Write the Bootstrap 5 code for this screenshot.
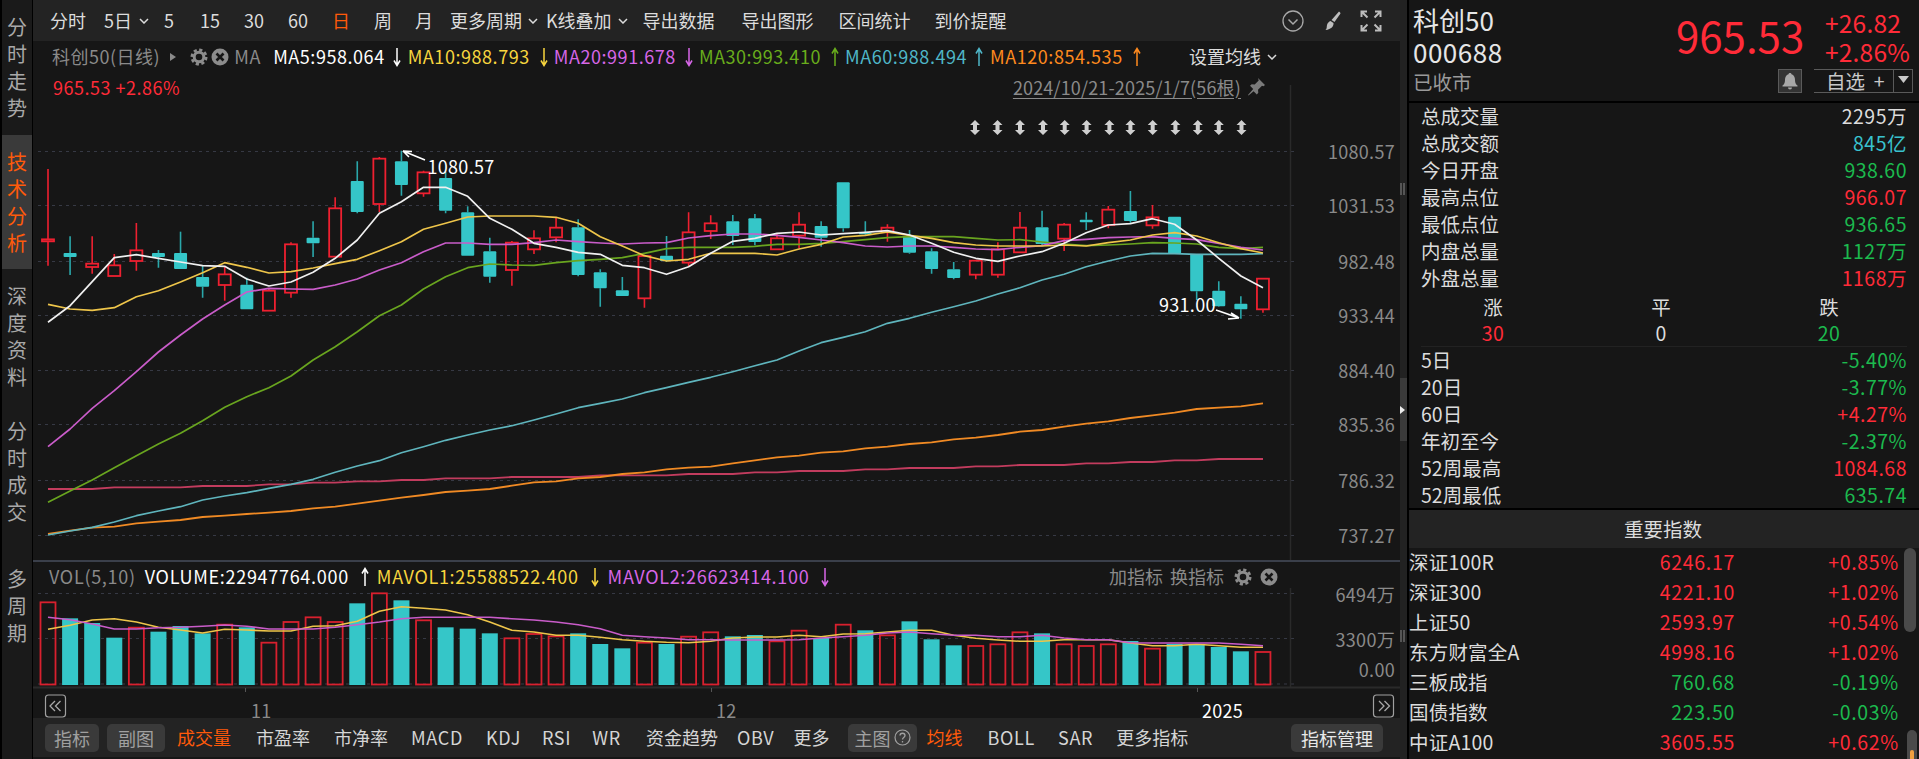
<!DOCTYPE html>
<html lang="zh-CN">
<head>
<meta charset="utf-8">
<title>科创50</title>
<link rel="stylesheet" href="https://cdn.jsdelivr.net/npm/bootstrap@5.3.0/dist/css/bootstrap.min.css">
<style>
html,body{height:759px;overflow:hidden;}
body{background:#000;font-family:"Noto Sans CJK SC","Liberation Sans",sans-serif;font-size:18px;color:#d8d8d8;line-height:1.35;width:1919px;}
.side{width:30px;margin-left:2px;margin-right:1px;background:#1a1a1a;color:#a8a8a8;flex:none;height:759px;font-size:20px;}
.stab{height:134.5px;line-height:27px;text-align:center;}
.stab-on{background:#3a3a3a;color:#ff5a0a;}
.centre{width:1367px;background:#161616;flex:none;height:759px;}
.bar-t{height:41px;background:#232323;padding-left:17px;color:#dcdcdc;flex:none;}
.bar-b{height:39px;background:#232323;padding-left:12px;padding-right:17px;color:#d5d5d5;flex:none;}
.on{color:#ff5a0a;}
.lat{letter-spacing:.7px;}
.lat2{letter-spacing:.55px;}
.g3{margin-left:3px}.g7{margin-left:7px}.g9{margin-left:9px}.g11{margin-left:11px}.g12{margin-left:12px}.g13{margin-left:13px}.g14{margin-left:14px}.g15{margin-left:15px}.g17{margin-left:17px}.g18{margin-left:18px}.g19{margin-left:19px}.g20{margin-left:20px}.g21{margin-left:21px}.g22{margin-left:22px}.g23{margin-left:23px}.g24{margin-left:24px}.g25{margin-left:25px}.g26{margin-left:26px}.g27{margin-left:27px}
.g4{margin-left:4px}.g5{margin-left:5px}.g6{margin-left:6px}.g8{margin-left:8px}.g10{margin-left:10px}
.gbtn{background:#3a3a3a;border-radius:5px;height:28px;color:#a0a0a0;font-size:18px;padding:0 9px;border:0;line-height:28px;}
.gbtn-wide{padding:0 11px;}
.gbtn-q{padding:0 6px;}
.gbtn-w{color:#e8e8e8;padding:0 10px;}
.leg{height:31px;padding-left:19px;flex:none;white-space:nowrap;}
.leg2{height:26px;padding-left:16px;flex:none;white-space:nowrap;padding-top:3px;}
.mute{color:#8a8a8a;}
.c-w{color:#fff}.c-y{color:#f7d53e}.c-m{color:#d766e8}.c-g{color:#69ad1c}.c-t{color:#4fb6c8}.c-o{color:#ff8a1e}
.up{color:#ff2b38;letter-spacing:.5px}.dn{color:#1cba4e;letter-spacing:.5px}.cy{color:#39c2cf;letter-spacing:.5px}.wh{color:#dcdcdc}
.sp{letter-spacing:.5px;}
.leg-two{position:absolute;left:0;right:0;top:30px;height:32px;padding:0 134px 0 20px;}
.dt{color:#8a8a8a;text-decoration:underline;text-underline-offset:3px;letter-spacing:.15px;}
.chart{display:block;flex:none;overflow:visible;}
.chart text{font-family:"Noto Sans CJK SC","Liberation Sans",sans-serif;font-size:18px;fill:#8a8a8a;dominant-baseline:central;letter-spacing:.3px;}
.chart text.lbl{fill:#fff;}
.sep{height:2px;background:#3a3f4a;flex:none;}
.gut{width:7px;background:#222;flex:none;height:759px;margin-right:2px;}
.gut-hdl{height:12px;margin-top:183px;border-left:2px solid #555;border-right:2px solid #555;width:5px;}
.gut-btn{height:63px;margin-top:183px;background:#3a3a3a;color:#eee;}
.gut-hdl2{height:12px;margin-top:189px;border-left:2px solid #555;border-right:2px solid #555;width:5px;}
.right{width:510px;background:#161616;height:759px;flex:none;font-size:19.5px;}
.head{height:101px;position:relative;flex:none;padding-top:4px;}
.nm{font-size:26px;line-height:32px;padding-left:4px;color:#e6e6e6;}
.nm-d{letter-spacing:.5px;}
.st{font-size:19.5px;color:#9a9a9a;padding-left:4px;line-height:28px;}
.px{font-size:42px;color:#ff2b38;width:132px;text-align:left;line-height:52px;margin-top:-4px;}
.chg{font-size:24.5px;color:#ff2b38;line-height:29px;width:94px;letter-spacing:.2px;}
.hbar{height:2px;background:#000;flex:none;}
.stat{height:27px;padding:0 12px;flex:none;}
.stat-col{height:191px;flex:none;}
.stat-box{height:161px;overflow:hidden;flex:none;}
.trio{height:26px;flex:none;}
.trio span{width:168px;text-align:center;display:block;}
.thin{height:1px;background:#222;margin:0 12px;flex:none;}
.ix-h{height:38px;background:#232323;flex:none;font-size:19.5px;color:#dcdcdc;padding-right:2px;}
.ix{height:30px;flex:none;position:relative;}
.ix-n{width:200px;color:#dcdcdc;white-space:nowrap;letter-spacing:.2px;}
.ix-p{width:126px;text-align:right;letter-spacing:.7px;}
.ix-c{width:164px;text-align:right;letter-spacing:.7px;}
.ix-wrap{position:relative;flex:1;margin-top:-1px;}
.scr{position:absolute;right:3px;top:1px;width:12px;height:84px;background:#4a4a4a;border-radius:6px;}
.wgt{position:absolute;right:2px;bottom:0;width:10px;height:29px;background:#4a4a4a;border-radius:5px 5px 0 0;}
.wgt-i{position:absolute;left:3px;bottom:0;width:4px;height:9px;background:#f0a040;border-radius:2px 2px 0 0;}
.ibtn{position:absolute;top:69px;left:369px;width:24px;height:24px;background:#333;border:1px solid #5a5a5a;padding:2px;}
.fav{position:absolute;top:69px;left:405px;width:99px;height:24px;border-top:1px solid #5a5a5a;border-bottom:1px solid #5a5a5a;font-size:19.5px;color:#c8c8c8;}
.fav-a{width:80px;padding-left:12px;border-right:1px solid #5a5a5a;height:100%;line-height:22px;}
.fav-b{width:19px;border-right:1px solid #5a5a5a;height:100%;padding-bottom:4px;}
.pinfo{position:absolute;top:8px;left:267px;}
.ic{flex:none;display:block;}
.end18{margin-right:18px;}
.end123{margin-right:123px;}
.end122{margin-right:122px;}
</style>
</head>
<body class="d-flex">
<svg width="0" height="0" class="position-absolute">
<defs>
<symbol id="chev" viewBox="0 0 10 6"><path d="M1 1l4 4 4-4" fill="none" stroke="currentColor" stroke-width="1.5"/></symbol>
<symbol id="adn" viewBox="0 0 8 20"><path d="M4 1v17M1 13.500l3 5 3-5" fill="none" stroke="currentColor" stroke-width="1.500"/></symbol>
<symbol id="aup" viewBox="0 0 8 20"><path d="M4 19V2M1 6.500l3-5 3 5" fill="none" stroke="currentColor" stroke-width="1.500"/></symbol>
<symbol id="gear" viewBox="0 0 18 18"><circle cx="9" cy="9" r="4.800" fill="none" stroke="#8c8c8c" stroke-width="3"/><circle cx="9" cy="9" r="7.200" fill="none" stroke="#8c8c8c" stroke-width="2.600" stroke-dasharray="3.200 2.450"/></symbol>
<symbol id="xc" viewBox="0 0 18 18"><circle cx="9" cy="9" r="8.500" fill="#8c8c8c"/><path d="M5.500 5.500l7 7m0-7l-7 7" stroke="#161616" stroke-width="2.600"/></symbol>
<symbol id="updn" viewBox="0 0 11 15"><path d="M5.500 0L10.500 5H7.500V10H10.500L5.500 15 .5 10H3.500V5H.5z" fill="#cfcfcf"/></symbol>
</defs>
</svg>

<nav class="side d-flex flex-column">
<div class="stab d-flex align-items-center justify-content-center"><div>分<br>时<br>走<br>势</div></div>
<div class="stab stab-on d-flex align-items-center justify-content-center"><div>技<br>术<br>分<br>析</div></div>
<div class="stab d-flex align-items-center justify-content-center"><div>深<br>度<br>资<br>料</div></div>
<div class="stab d-flex align-items-center justify-content-center"><div>分<br>时<br>成<br>交</div></div>
<div class="stab d-flex align-items-center justify-content-center"><div>多<br>周<br>期</div></div>
</nav>

<main class="centre d-flex flex-column">
<div class="bar-t d-flex align-items-center">
<span>分时</span>
<span class="g18">5日</span><svg class="ic g7" width="10" height="6"><use href="#chev"/></svg>
<span class="g15">5</span><span class="g26">15</span><span class="g24">30</span><span class="g24">60</span>
<span class="g24 on">日</span><span class="g24">周</span><span class="g23">月</span>
<span class="g17">更多周期</span><svg class="ic g6" width="10" height="6"><use href="#chev"/></svg>
<span class="g8">K线叠加</span><svg class="ic g6" width="10" height="6"><use href="#chev"/></svg>
<span class="g15">导出数据</span><span class="g27">导出图形</span><span class="g25">区间统计</span><span class="g24">到价提醒</span>
<div class="ms-auto d-flex align-items-center">
<svg class="ic" width="22" height="22" viewBox="0 0 22 22"><circle cx="11" cy="11" r="10" fill="none" stroke="#a8a8a8" stroke-width="1.300"/><path d="M6.500 9.500l4.500 4.500 4.500-4.500" fill="none" stroke="#a8a8a8" stroke-width="1.500"/></svg>
<svg class="ic g19" width="18" height="20" viewBox="0 0 18 20"><path d="M16 .5c1 .6 1.500 1.300 1.500 2L11.500 11 8.500 9zM7.500 10l3 2c.3 3-2 6.500-8 7 1.800-1.700 1-3.500 1.500-5 .5-2 2-3.500 3.500-4z" fill="#bdbdbd"/></svg>
<svg class="ic g19 end18" width="22" height="22" viewBox="0 0 22 22"><path d="M1.500 7V1.500H7M1.500 1.500L7.500 7.500M20.500 7V1.500H15M20.500 1.500L14.500 7.500M1.500 15v5.500H7M1.500 20.500l6-6M20.500 15v5.500H15M20.500 20.500l-6-6" fill="none" stroke="#bdbdbd" stroke-width="2"/></svg>
</div>
</div>

<div class="position-relative flex-none">
<div class="leg d-flex align-items-center">
<span class="mute sp">科创50(日线)</span>
<svg class="ic g10" width="6" height="8" viewBox="0 0 6 8"><path d="M0 0l6 4-6 4z" fill="#8a8a8a"/></svg>
<svg class="ic g14" width="18" height="18"><use href="#gear"/></svg>
<svg class="ic g3" width="18" height="18"><use href="#xc"/></svg>
<span class="mute g5 lat">MA</span>
<span class="c-w g12 lat2">MA5:958.064</span><svg class="ic g8 c-w" width="8" height="20"><use href="#adn"/></svg>
<span class="c-y g7 lat2">MA10:988.793</span><svg class="ic g10 c-y" width="8" height="20"><use href="#adn"/></svg>
<span class="c-m g6 lat2">MA20:991.678</span><svg class="ic g9 c-m" width="8" height="20"><use href="#adn"/></svg>
<span class="c-g g6 lat2">MA30:993.410</span><svg class="ic g10 c-g" width="8" height="20"><use href="#aup"/></svg>
<span class="c-t g6 lat2">MA60:988.494</span><svg class="ic g8 c-t" width="8" height="20"><use href="#aup"/></svg>
<span class="c-o g7 lat2">MA120:854.535</span><svg class="ic g10 c-o" width="8" height="20"><use href="#aup"/></svg>
<span class="ms-auto wh">设置均线</span><svg class="ic g6 end123" width="10" height="6"><use href="#chev"/></svg>
</div>
<div class="leg-two d-flex align-items-center justify-content-between">
<span class="up">965.53 +2.86%</span>
<div class="d-flex align-items-center">
<span class="dt">2024/10/21-2025/1/7(56根)</span>
<svg class="ic g5" width="20" height="20" viewBox="0 0 20 20"><path d="M12 1l7 7-1.500 1.200-1.500-.4-4 4 .3 3-1.500 1.700-3.200-3.200L2.500 18.500 2 18l5.200-6-3.200-3.200L5.700 7.300l3 .3 4-4-.4-1.500z" fill="#7a7a7a"/></svg>
</div>
</div>
<svg id="main" class="chart" width="1367" height="488" viewBox="33 72 1367 488">
<g id="mgrid"></g>
<path d="M1290.500 85V560" stroke="#2a2a2a" stroke-width="1.500"/>
<text x="1395" y="151" text-anchor="end">1080.57</text>
<text x="1395" y="205" text-anchor="end">1031.53</text>
<text x="1395" y="261" text-anchor="end">982.48</text>
<text x="1395" y="315" text-anchor="end">933.44</text>
<text x="1395" y="370" text-anchor="end">884.40</text>
<text x="1395" y="424" text-anchor="end">835.36</text>
<text x="1395" y="480" text-anchor="end">786.32</text>
<text x="1395" y="535" text-anchor="end">737.27</text>
<g id="mc"></g>
<g id="mup"></g>
<text class="lbl" x="427.500" y="166">1080.57</text>
<text class="lbl" x="1159" y="304">931.00</text>
<path d="M425 160L403 151M403 151l9 .5M403 151l6 6M1216 310L1239 318M1239 318l-11 1M1239 318l-8-5" fill="none" stroke="#fff" stroke-width="1.600"/>
</svg>
</div>
<div class="sep"></div>
<div class="leg2 d-flex align-items-center">
<span class="mute lat">VOL(5,10)</span>
<span class="c-w g9 lat">VOLUME:22947764.000</span><svg class="ic g12 c-w" width="8" height="20"><use href="#aup"/></svg>
<span class="c-y g8 lat">MAVOL1:25588522.400</span><svg class="ic g12 c-y" width="8" height="20"><use href="#adn"/></svg>
<span class="c-m g9 lat">MAVOL2:26623414.100</span><svg class="ic g12 c-m" width="8" height="20"><use href="#adn"/></svg>
<span class="mute ms-auto">加指标</span><span class="mute g7">换指标</span>
<svg class="ic g10" width="18" height="18"><use href="#gear"/></svg><svg class="ic g8 end122" width="18" height="18"><use href="#xc"/></svg>
</div>
<svg id="vol" class="chart" width="1367" height="130" viewBox="33 590 1367 130">
<g id="vgrid"></g>
<path d="M1290.500 590V689" stroke="#2a2a2a" stroke-width="1.500"/>
<path d="M33 689.500H1400" stroke="#2a2a2a" stroke-width="2"/>
<path d="M245.500 690v4M711.500 690v4M1197.500 690v4" stroke="#555" stroke-width="1"/>
<text x="1395" y="596" text-anchor="end">6494万</text>
<text x="1395" y="641" text-anchor="end">3300万</text>
<text x="1395" y="671" text-anchor="end">0.00</text>
<g id="vb"></g>
<g id="vl"></g>
<text x="251" y="712">11</text>
<text x="716" y="712">12</text>
<text class="lbl" x="1202" y="712">2025</text>
<rect x="45.500" y="697" width="20" height="22" rx="3" fill="none" stroke="#a0a0a0" stroke-width="1.200"/>
<path d="M55 703l-5 5 5 5M60.500 703l-5 5 5 5" fill="none" stroke="#a8a8a8" stroke-width="1.300"/>
<rect x="1373.500" y="697" width="20" height="22" rx="3" fill="none" stroke="#a0a0a0" stroke-width="1.200"/>
<path d="M1379 703l5 5-5 5M1384.500 703l5 5-5 5" fill="none" stroke="#a8a8a8" stroke-width="1.300"/>
</svg>
<div class="bar-b d-flex align-items-center">
<button class="gbtn">指标</button><button class="gbtn gbtn-wide g8">副图</button>
<span class="on g12">成交量</span><span class="g25">市盈率</span><span class="g24">市净率</span>
<span class="g23 lat">MACD</span><span class="g23 lat">KDJ</span><span class="g21 lat">RSI</span><span class="g21 lat">WR</span>
<span class="g25">资金趋势</span><span class="g19 lat">OBV</span><span class="g19">更多</span>
<button class="gbtn gbtn-q g19 d-flex align-items-center"><span>主图</span><svg class="ic g4" width="17" height="17" viewBox="0 0 17 17"><circle cx="8.500" cy="8.500" r="7.500" fill="none" stroke="#a0a0a0" stroke-width="1.200"/><path d="M6 6.500c0-3 5-3 5 0 0 2-2.500 2-2.500 4M8.500 12v1.500" fill="none" stroke="#a0a0a0" stroke-width="1.300"/></svg></button>
<span class="on g9">均线</span><span class="g25 lat">BOLL</span><span class="g23 lat">SAR</span><span class="g23">更多指标</span>
<button class="gbtn gbtn-w ms-auto">指标管理</button>
</div>
</main>

<div class="gut d-flex flex-column">
<div class="gut-hdl"></div>
<div class="gut-btn d-flex align-items-center"><svg class="ic" width="6" height="8" viewBox="0 0 6 8"><path d="M0 0l5 4-5 4z" fill="#eee"/></svg></div>
<div class="gut-hdl2"></div>
</div>

<aside class="right d-flex flex-column">
<div class="head">
<div class="nm">科创50</div>
<div class="nm nm-d">000688</div>
<div class="st">已收市</div>
<div class="pinfo d-flex align-items-center">
<div class="px">965.53</div>
<div class="chg g17"><div>+26.82</div><div>+2.86%</div></div>
</div>
<div class="ibtn"><svg class="ic" width="18" height="18" viewBox="0 0 18 18"><path d="M9 1c1 0 1.500.6 1.500 1.300C13 3 14 5.500 14 8c0 3 1 4.500 2.500 5.500v1h-15v-1C3 12.500 4 11 4 8c0-2.500 1-5 3.500-5.700C7.500 1.600 8 1 9 1zM7 15.500h4a2 2 0 0 1-4 0z" fill="#a8a8a8"/></svg></div>
<div class="fav d-flex">
<div class="fav-a">自选&nbsp;&nbsp;+</div>
<div class="fav-b d-flex align-items-center justify-content-center"><svg class="ic" width="11" height="7" viewBox="0 0 11 7"><path d="M0 0h11L5.500 7z" fill="#c8c8c8"/></svg></div>
</div>
</div>
<div class="hbar"></div>
<div class="stat-col d-flex flex-column">
<div class="stat d-flex justify-content-between align-items-center"><span class="wh">总成交量</span><span class="wh sp">2295万</span></div>
<div class="stat d-flex justify-content-between align-items-center"><span class="wh">总成交额</span><span class="cy">845亿</span></div>
<div class="stat d-flex justify-content-between align-items-center"><span class="wh">今日开盘</span><span class="dn">938.60</span></div>
<div class="stat d-flex justify-content-between align-items-center"><span class="wh">最高点位</span><span class="up">966.07</span></div>
<div class="stat d-flex justify-content-between align-items-center"><span class="wh">最低点位</span><span class="dn">936.65</span></div>
<div class="stat d-flex justify-content-between align-items-center"><span class="wh">内盘总量</span><span class="dn">1127万</span></div>
<div class="stat d-flex justify-content-between align-items-center"><span class="wh">外盘总量</span><span class="up">1168万</span></div>
</div>
<div class="trio d-flex align-items-center"><span class="wh">涨</span><span class="wh">平</span><span class="wh">跌</span></div>
<div class="trio d-flex align-items-center"><span class="up">30</span><span class="wh">0</span><span class="dn">20</span></div>
<div class="thin"></div>
<div class="stat-box d-flex flex-column">
<div class="stat d-flex justify-content-between align-items-center"><span class="wh">5日</span><span class="dn">-5.40%</span></div>
<div class="stat d-flex justify-content-between align-items-center"><span class="wh">20日</span><span class="dn">-3.77%</span></div>
<div class="stat d-flex justify-content-between align-items-center"><span class="wh">60日</span><span class="up">+4.27%</span></div>
<div class="stat d-flex justify-content-between align-items-center"><span class="wh">年初至今</span><span class="dn">-2.37%</span></div>
<div class="stat d-flex justify-content-between align-items-center"><span class="wh">52周最高</span><span class="up">1084.68</span></div>
<div class="stat d-flex justify-content-between align-items-center"><span class="wh">52周最低</span><span class="dn">635.74</span></div>
</div>
<div class="hbar"></div>
<div class="ix-h d-flex align-items-center justify-content-center">重要指数</div>
<div class="ix-wrap">
<div class="scr"></div>
<div class="wgt"><div class="wgt-i"></div></div>
<div class="ix d-flex align-items-center"><span class="ix-n">深证100R</span><span class="ix-p up">6246.17</span><span class="ix-c up">+0.85%</span></div>
<div class="ix d-flex align-items-center"><span class="ix-n">深证300</span><span class="ix-p up">4221.10</span><span class="ix-c up">+1.02%</span></div>
<div class="ix d-flex align-items-center"><span class="ix-n">上证50</span><span class="ix-p up">2593.97</span><span class="ix-c up">+0.54%</span></div>
<div class="ix d-flex align-items-center"><span class="ix-n">东方财富全A</span><span class="ix-p up">4998.16</span><span class="ix-c up">+1.02%</span></div>
<div class="ix d-flex align-items-center"><span class="ix-n">三板成指</span><span class="ix-p dn">760.68</span><span class="ix-c dn">-0.19%</span></div>
<div class="ix d-flex align-items-center"><span class="ix-n">国债指数</span><span class="ix-p dn">223.50</span><span class="ix-c dn">-0.03%</span></div>
<div class="ix d-flex align-items-center"><span class="ix-n">中证A100</span><span class="ix-p up">3605.55</span><span class="ix-c up">+0.62%</span></div>
</div>
</aside>

<script src="https://cdn.jsdelivr.net/npm/bootstrap@5.3.0/dist/js/bootstrap.bundle.min.js"></script>
<script>
var NS='http://www.w3.org/2000/svg';
function el(p,n,a){var e=document.createElementNS(NS,n);for(var k in a)e.setAttribute(k,a[k]);p.appendChild(e);return e;}
function X(i){return 48+i*22.09;}
function Y(z){return 130+z/3;}
function V(z){return 540+z/3;}
var mg=document.getElementById('mgrid');
[151,205,261,315,370,424,480,535].forEach(function(y){el(mg,'path',{d:'M38 '+(y+.5)+'H1296',stroke:'#363944','stroke-dasharray':'3 4','stroke-width':1.2});});
var vg=document.getElementById('vgrid');
[595,640,685.5].forEach(function(y){el(vg,'path',{d:'M38 '+(y+.5)+'H1296',stroke:'#363944','stroke-dasharray':'3 4','stroke-width':1.2});});
var C=[['r',117,407,328,334],['t',319,435,369,381],['r',319,431,401,411],['r',372,438,406,438],['r',279,422,361,393],['t',360,413,369,381],['t',305,417,369,417],['t',406,503,441,470],['r',410,512,433,465],['t',443,538,464,538],['r',475,542,482,542],['r',337,503,343,488],['t',274,381,323,340],['r',202,380,235,380],['t',94,250,153,246],['r',81,246,86,222],['t',62,197,94,165],['r',122,200,127,190],['t',125,250,144,242],['t',229,377,247,377],['t',323,458,364,440],['r',333,467,338,420],['r',301,372,325,358],['r',264,337,293,322],['t',268,439,292,435],['t',418,530,427,475],['t',441,498,481,498],['r',374,533,378,505],['t',318,396,377,393],['r',247,408,307,398],['r',256,327,280,303],['t',255,345,274,318],['t',252,346,265,336],['r',312,358,325,358],['r',247,355,284,317],['t',274,350,288,323],['t',157,305,157,295],['t',274,317,309,313],['r',283,335,293,307],['t',300,371,318,368],['t',355,431,364,417],['t',396,448,418,444],['r',390,448,392,434],['r',337,443,358,434],['r',246,368,293,367],['t',242,348,292,342],['r',279,363,284,326],['t',247,300,269,277],['r',228,295,239,285],['t',183,278,243,273],['r',225,296,262,286],['t',260,372,260,372],['t',372,510,372,484],['t',454,530,482,529],['t',499,566,521,538],['r',445,548,446,538]];
var mc=document.getElementById('mc');
C.forEach(function(c,i){var x=X(i),red=c[0]=='r',col=red?'#ee2030':'#2aa7aa';
 el(mc,'path',{d:'M'+x+' '+Y(c[1])+'V'+Y(c[3])+'M'+x+' '+Y(c[4])+'V'+Y(c[2]),stroke:col,'stroke-width':1.6,fill:'none'});
 var t=Y(c[3]),h=Y(c[4])-t;
 if(red)el(mc,'rect',{x:x-6,y:t,width:12,height:h,fill:'none',stroke:'#ee2030','stroke-width':1.8});
 else el(mc,'rect',{x:x-6.5,y:t,width:13,height:h,fill:'#35c6c8',rx:1});
});
var up=document.getElementById('mup');
[975,997.5,1020,1043,1064.7,1086.6,1109.4,1130.4,1152.7,1175.4,1197.8,1218.8,1241.5].forEach(function(x){el(up,'use',{href:'#updn',x:x-5.5,y:120,width:11,height:15});});
function line(p,arr,f,col,w){var s=arr.map(function(v,i){return X(i).toFixed(1)+','+f(v).toFixed(1);}).join(' ');el(p,'polyline',{points:s,fill:'none',stroke:col,'stroke-width':w,'stroke-linejoin':'round'});}
var M250=[567,567,567,562,562,562,562,558,558,558,553,553,548,548,544,544,540,540,535,535,535,531,531,531,531,526,526,526,526,522,522,522,517,517,513,513,513,508,508,504,504,504,499,499,495,495,495,490,490,486,486,481,481,477,477,477];
var M120=[702,692,683,680,670,665,660,651,647,642,638,633,625,620,611,602,593,585,576,572,567,557,547,544,535,531,522,517,508,503,500,490,481,472,467,458,454,445,440,432,427,418,413,405,395,390,380,371,364,354,346,338,327,323,319,310];
var M60=[1215,1203,1192,1176,1157,1143,1130,1110,1098,1088,1075,1063,1048,1027,1008,992,968,950,931,915,900,887,870,852,833,820,807,788,773,757,742,725,707,690,663,638,622,605,580,565,547,530,513,492,473,450,433,410,393,378,370,371,373,373,373,371];
var M30=[1117,1083,1050,1013,977,942,910,872,832,800,773,738,690,650,605,557,525,477,440,413,402,405,406,398,392,388,383,370,356,352,352,352,349,343,343,340,335,329,323,320,320,320,325,330,329,336,342,347,345,342,338,339,342,352,356,352];
var M20=[950,897,835,782,725,666,615,567,525,486,475,477,478,465,447,420,398,365,339,339,343,343,338,330,335,339,342,339,338,324,317,312,312,316,322,330,338,348,351,348,348,352,357,359,352,347,332,328,323,321,320,325,329,340,352,360];
var M10=[523,537,541,533,500,482,456,428,398,412,429,425,414,401,388,362,335,298,280,261,258,258,258,262,280,320,348,377,393,388,370,370,370,375,357,343,321,316,306,316,325,338,345,348,348,348,345,348,338,330,315,308,318,338,356,369];
var M5=[577,527,455,383,374,385,396,407,409,447,468,456,427,385,330,250,215,172,172,199,265,298,340,352,367,373,406,413,433,410,370,334,325,310,306,315,311,307,302,315,340,367,385,394,378,365,340,308,285,281,266,283,330,385,438,473];
var P=function(y){return 300+y/3;};
line(up,M250,P,'#c23c5e',1.8);
line(up,M120,P,'#f08a24',1.8);
line(up,M60,Y,'#5fb5bd',1.7);
line(up,M30,Y,'#69a51f',1.7);
line(up,M20,Y,'#c95cc9',1.7);
line(up,M10,Y,'#eec54a',1.7);
line(up,M5,Y,'#f0f0f0',1.7);
var B=[['r',193],['t',241],['t',255],['t',299],['r',269],['t',281],['t',264],['t',286],['r',260],['t',268],['r',314],['r',252],['r',238],['r',252],['t',196],['r',166],['t',187],['r',247],['t',268],['t',272],['t',286],['r',301],['r',288],['r',295],['t',286],['t',318],['t',331],['r',314],['t',318],['r',296],['r',283],['t',295],['t',291],['r',310],['r',278],['t',300],['r',260],['t',277],['r',292],['t',250],['t',304],['t',322],['r',324],['r',319],['r',283],['t',286],['r',319],['r',324],['r',319],['t',309],['r',332],['t',318],['t',318],['t',327],['t',340],['r',342]];
var vb=document.getElementById('vb');
B.forEach(function(b,i){var x=X(i),t=V(b[1]),h=687-t;
 if(b[0]=='r')el(vb,'rect',{x:x-7.5,y:t,width:15,height:h-.5,fill:'none',stroke:'#d8202e','stroke-width':1.8});
 else el(vb,'rect',{x:x-8,y:t,width:16,height:h,fill:'#35c6c8'});
});
var VY=[274,262,246,242,252,268,276,285,274,276,279,279,265,263,250,220,206,211,216,230,252,277,282,292,292,298,305,310,313,314,310,300,297,297,292,296,288,287,282,277,277,292,301,306,310,310,305,305,305,315,323,323,319,323,328,328];
var VM=[238,245,258,273,273,269,268,265,261,265,273,273,273,268,260,252,242,238,238,238,238,242,246,252,260,272,292,296,300,305,305,306,306,306,305,300,296,292,285,282,287,292,292,296,296,292,300,305,305,314,315,315,315,315,319,323];
var vl=document.getElementById('vl');
line(vl,VY,V,'#eec54a',1.6);
line(vl,VM,V,'#c95cc9',1.6);
</script>
</body>
</html>
